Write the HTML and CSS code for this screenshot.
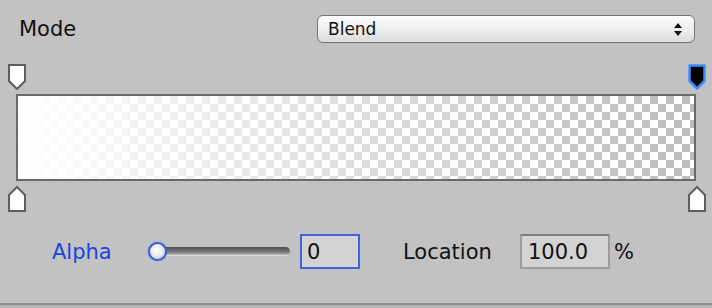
FILE: index.html
```html
<!DOCTYPE html>
<html>
<head>
<meta charset="utf-8">
<link rel="stylesheet" href="styles.css">
</head>
<body>
<div class="panel">
  <div class="header">
    <span class="mode-label">Mode</span>
    <div class="dropdown">
      <span class="dropdown-text">Blend</span>
      <svg class="updown" width="8" height="13" viewBox="0 0 8 13"><path d="M4 0 L8 5 H0 Z M0 8 H8 L4 13 Z" fill="#111"/></svg>
    </div>
  </div>
  <div class="markers">
    <svg class="marker" width="18" height="26" viewBox="0 0 18 26"><path d="M1 1 H17 V17 L9 25 L1 17 Z" fill="#fff" stroke="#5e5e5e" stroke-width="2"/></svg>
    <svg class="marker" width="18" height="26" viewBox="0 0 18 26"><path d="M1.5 1.5 H16.5 V17 L9 24.5 L1.5 17 Z" fill="#000" stroke="#3d8cff" stroke-width="2.5" stroke-linejoin="round"/></svg>
  </div>
  <div class="gradient-box"></div>
  <div class="markers markers-bottom">
    <svg class="marker" width="18" height="27" viewBox="0 0 18 27"><path d="M1 26 H17 V10 L9 2 L1 10 Z" fill="#fff" stroke="#5e5e5e" stroke-width="2"/></svg>
    <svg class="marker" width="18" height="27" viewBox="0 0 18 27"><path d="M1 26 H17 V10 L9 2 L1 10 Z" fill="#fff" stroke="#5e5e5e" stroke-width="2"/></svg>
  </div>
  <div class="controls">
    <span class="alpha-label">Alpha</span>
    <div class="slider">
      <div class="track"></div>
      <div class="knob"></div>
    </div>
    <div class="field field-active">0</div>
    <span class="loc-label">Location</span>
    <div class="field field-loc">100.0</div>
    <span class="pct">%</span>
  </div>
  <div class="footer-line"></div>
</div>
</body>
</html>
```
FILE: styles.css
```css
html, body {
  margin: 0;
  padding: 0;
  background: #c2c2c2;
  width: 712px;
  height: 308px;
  overflow: hidden;
  font-family: "DejaVu Sans", "Liberation Sans", sans-serif;
  color: #111;
}

.panel {
  display: flex;
  flex-direction: column;
}

.header {
  display: flex;
  align-items: center;
  height: 28px;
  margin-top: 15px;
}

.mode-label {
  margin-left: 19px;
  font-size: 21px;
}

.dropdown {
  margin-left: auto;
  margin-right: 17px;
  width: 378px;
  height: 28px;
  box-sizing: border-box;
  border: 1.5px solid #737373;
  border-radius: 6px;
  background: linear-gradient(to bottom, #fdfdfd 0%, #f0f0f0 45%, #dcdcdc 100%);
  display: flex;
  align-items: center;
  padding: 0 12px 0 10px;
}

.dropdown-text {
  font-size: 17px;
  flex: 1;
}

.updown {
  display: block;
}

.markers {
  display: flex;
  justify-content: space-between;
  padding: 0 6px 0 8px;
  margin-top: 21px;
  height: 26px;
}

.marker {
  display: block;
}

.markers-bottom {
  margin-top: 4px;
  height: 27px;
}

.gradient-box {
  margin: 4px 16px 0 16px;
  height: 87px;
  box-sizing: border-box;
  border: 2px solid #6a6a6a;
  background-image:
    linear-gradient(to right, rgba(255,255,255,1) 0%, rgba(255,255,255,0.6) 40%, rgba(255,255,255,0) 100%),
    conic-gradient(#bdbdbd 25%, #ffffff 0 50%, #bdbdbd 0 75%, #ffffff 0);
  background-size: 100% 100%, 16px 16px;
  background-position: 0 0, 0 0;
}

.controls {
  display: flex;
  align-items: center;
  margin-top: 22px;
  height: 35px;
}

.alpha-label {
  margin-left: 52px;
  font-size: 21px;
  color: #1a44e0;
  width: 96px;
}

.slider {
  position: relative;
  width: 142px;
  height: 20px;
}

.track {
  position: absolute;
  left: 9px;
  right: 0;
  top: 5px;
  height: 9px;
  border-radius: 5px;
  background: linear-gradient(to bottom, #4f4f4f 0%, #7a7a7a 55%, #a5a5a5 80%, #ececec 100%);
}

.knob {
  position: absolute;
  left: 0;
  top: 0;
  width: 19px;
  height: 19px;
  box-sizing: border-box;
  border-radius: 50%;
  border: 2px solid #3660e0;
  background: radial-gradient(circle at 45% 40%, #ffffff 0%, #eeeeee 45%, #b8b8b8 100%);
  box-shadow: 0 0 1px #2a4fd0;
}

.field {
  box-sizing: border-box;
  height: 35px;
  background: #d3d3d3;
  font-size: 21px;
  display: flex;
  align-items: center;
}

.field-active {
  margin-left: 10px;
  width: 60px;
  border: 2px solid #3f63d8;
  padding-left: 5px;
}

.loc-label {
  margin-left: 43px;
  font-size: 21px;
  width: 117px;
}

.field-loc {
  width: 90px;
  border: 2px solid #9c9c9c;
  border-top-color: #7c7c7c;
  padding-left: 6px;
}

.pct {
  margin-left: 4px;
  font-size: 21px;
}

.footer-line {
  margin-top: 34px;
  height: 2px;
  background: #8f8f8f;
  border-bottom: 3px solid #b8b8b8;
}
```
